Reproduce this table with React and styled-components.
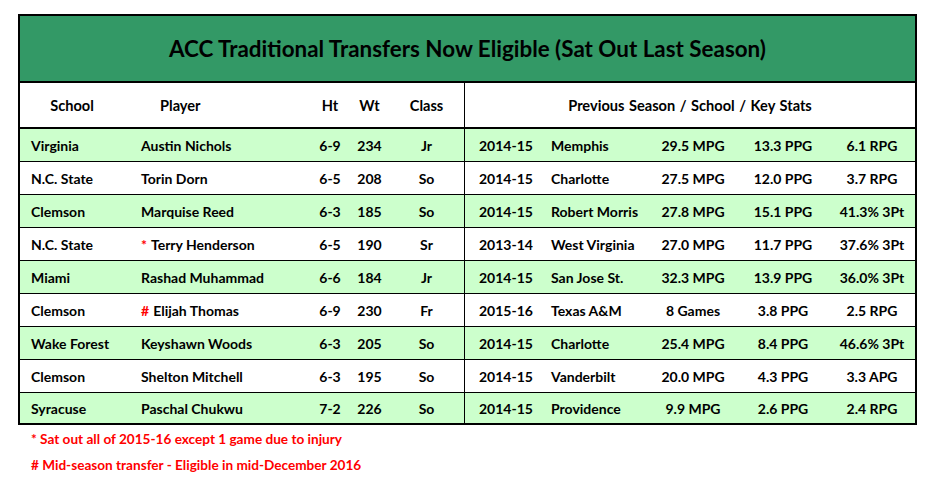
import React from 'react'
import styled, { createGlobalStyle } from 'styled-components'

const GlobalStyle = createGlobalStyle`
  body {
    margin: 0;
    background: #ffffff;
    font-family: Lato, "Open Sans", sans-serif;
    color: #000000;
  }
`

const Page = styled.div`
  padding: 14px 0 0 18px;
`

const Sheet = styled.div`
  width: 899px;
  box-sizing: border-box;
  border: 2px solid #000000;
`

const Title = styled.div`
  height: 67px;
  box-sizing: border-box;
  border-bottom: 2px solid #000000;
  background: #339966;
  display: flex;
  align-items: center;
  justify-content: center;
  font-size: 22.4px;
  font-weight: 700;
`

const Row = styled.div`
  display: grid;
  grid-template-columns: 104px 186px 40px 39px 76px 75px 105px 96px 84px 90px;
  box-sizing: border-box;
  height: ${(p) => p.$height}px;
  background: ${(p) => (p.$shade ? '#ccffcc' : '#ffffff')};
  border-bottom: ${(p) => p.$rule}px solid #000000;
  font-size: ${(p) => (p.$head ? 14.6 : 14)}px;
  font-weight: 700;
`

const Cell = styled.div`
  display: flex;
  align-items: center;
  justify-content: ${(p) => (p.$center ? 'center' : 'flex-start')};
  padding-left: ${(p) => p.$pad || 0}px;
  white-space: nowrap;
  border-right: ${(p) => (p.$divider ? '1px solid #000000' : 'none')};
`

const SpanCell = styled(Cell)`
  grid-column: span 5;
  word-spacing: 1px;
`

const Mark = styled.span`
  color: #ff0000;
  margin-right: 4px;
`

const Notes = styled.div`
  padding: 1px 0 0 13px;
  color: #ff0000;
  font-size: 13.6px;
  font-weight: 700;
  line-height: 26px;
`

const rows = [
  ['Virginia', '', 'Austin Nichols', '6-9', '234', 'Jr', '2014-15', 'Memphis', '29.5 MPG', '13.3 PPG', '6.1 RPG'],
  ['N.C. State', '', 'Torin Dorn', '6-5', '208', 'So', '2014-15', 'Charlotte', '27.5 MPG', '12.0 PPG', '3.7 RPG'],
  ['Clemson', '', 'Marquise Reed', '6-3', '185', 'So', '2014-15', 'Robert Morris', '27.8 MPG', '15.1 PPG', '41.3% 3Pt'],
  ['N.C. State', '*', 'Terry Henderson', '6-5', '190', 'Sr', '2013-14', 'West Virginia', '27.0 MPG', '11.7 PPG', '37.6% 3Pt'],
  ['Miami', '', 'Rashad Muhammad', '6-6', '184', 'Jr', '2014-15', 'San Jose St.', '32.3 MPG', '13.9 PPG', '36.0% 3Pt'],
  ['Clemson', '#', 'Elijah Thomas', '6-9', '230', 'Fr', '2015-16', 'Texas A&M', '8 Games', '3.8 PPG', '2.5 RPG'],
  ['Wake Forest', '', 'Keyshawn Woods', '6-3', '205', 'So', '2014-15', 'Charlotte', '25.4 MPG', '8.4 PPG', '46.6% 3Pt'],
  ['Clemson', '', 'Shelton Mitchell', '6-3', '195', 'So', '2014-15', 'Vanderbilt', '20.0 MPG', '4.3 PPG', '3.3 APG'],
  ['Syracuse', '', 'Paschal Chukwu', '7-2', '226', 'So', '2014-15', 'Providence', '9.9 MPG', '2.6 PPG', '2.4 RPG'],
]

const App = () => {
  return (
    <Page>
      <GlobalStyle />
      <Sheet>
        <Title>ACC Traditional Transfers Now Eligible (Sat Out Last Season)</Title>
        <Row $head $height={46} $rule={2}>
          <Cell $center>School</Cell>
          <Cell $pad={36}>Player</Cell>
          <Cell $center>Ht</Cell>
          <Cell $center>Wt</Cell>
          <Cell $center $divider>Class</Cell>
          <SpanCell $center>Previous Season / School / Key Stats</SpanCell>
        </Row>
        {rows.map((r, i) => {
          const last = i === rows.length - 1
          return (
            <Row key={i} $shade={i % 2 === 0} $height={last ? 30 : 33} $rule={last ? 0 : 1}>
              <Cell $pad={11}>{r[0]}</Cell>
              <Cell $pad={17}>
                {r[1] && <Mark>{r[1]}</Mark>}
                {r[2]}
              </Cell>
              <Cell $center>{r[3]}</Cell>
              <Cell $center>{r[4]}</Cell>
              <Cell $center $divider>{r[5]}</Cell>
              <Cell $pad={14}>{r[6]}</Cell>
              <Cell $pad={11}>{r[7]}</Cell>
              <Cell $center>{r[8]}</Cell>
              <Cell $center>{r[9]}</Cell>
              <Cell $center $pad={4}>{r[10]}</Cell>
            </Row>
          )
        })}
      </Sheet>
      <Notes>
        <div>* Sat out all of 2015-16 except 1 game due to injury</div>
        <div># Mid-season transfer - Eligible in mid-December 2016</div>
      </Notes>
    </Page>
  )
}

export default App
